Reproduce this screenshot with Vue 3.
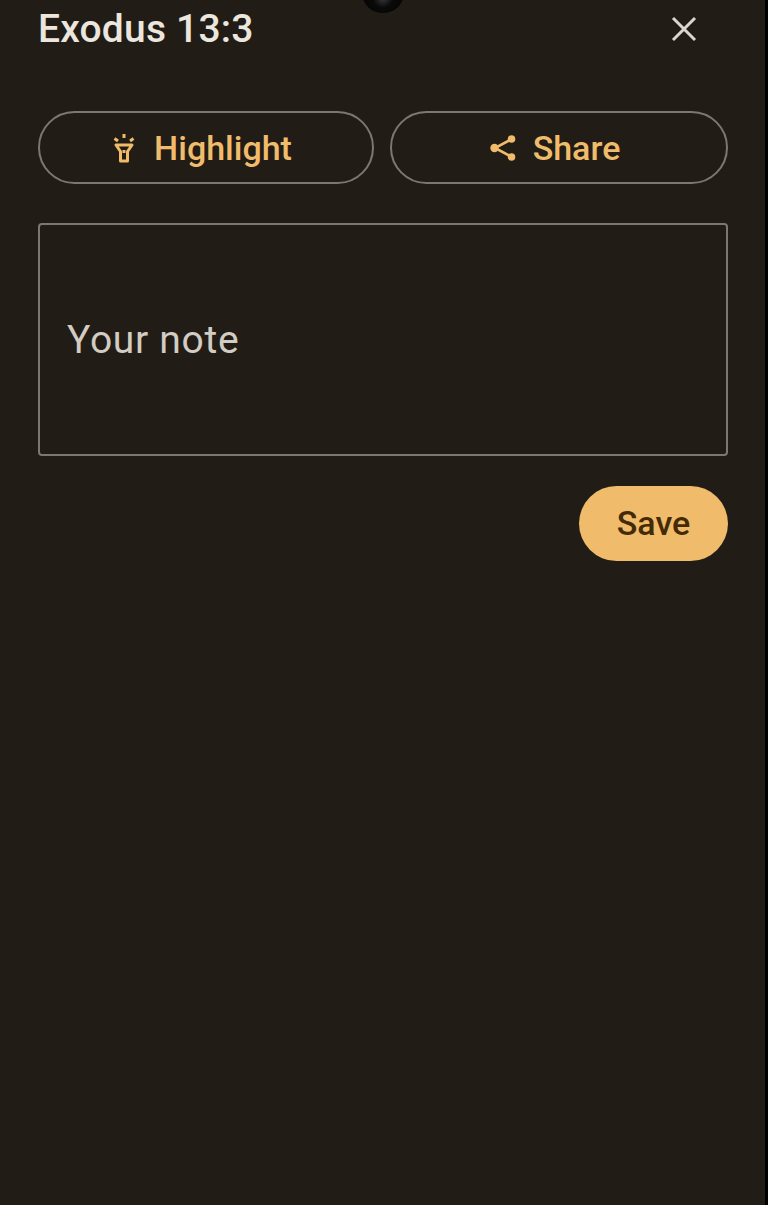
<script setup>
</script>

<template>
  <main class="sheet">
    <div class="camera"></div>
    <header class="head">
      <h1 class="title">Exodus 13:3</h1>
      <button class="close" aria-label="Close">
        <svg width="26" height="26" viewBox="0 0 26 26" fill="none" stroke="#dcd7ce" stroke-width="3">
          <path d="M2 2L24 24M24 2L2 24" />
        </svg>
      </button>
    </header>
    <div class="actions">
      <button class="pill">
        <svg class="ico" width="22" height="30" viewBox="0 0 22 30" fill="none" stroke="#f0bc6b" stroke-width="3">
          <path d="M3 12h16l-4.500 6.500v9.500h-7v-9.500z" stroke-linejoin="round" />
          <path d="M11 17v3" />
          <path d="M11 1v4M1.500 5.500l3.500 2.500M20.500 5.500L17 8" />
        </svg>
        <span>Highlight</span>
      </button>
      <button class="pill share">
        <svg class="ico" width="28" height="30" viewBox="0 0 28 30" fill="none" stroke="#f0bc6b" stroke-width="2.600">
          <path d="M22 6.500L6 15l16 8.500" />
          <circle cx="22.500" cy="6" r="3.800" fill="#f0bc6b" stroke="none" />
          <circle cx="5.500" cy="15" r="4.200" fill="#f0bc6b" stroke="none" />
          <circle cx="22.500" cy="24" r="3.800" fill="#f0bc6b" stroke="none" />
        </svg>
        <span>Share</span>
      </button>
    </div>
    <div class="note">Your note</div>
    <div class="foot">
      <button class="save">Save</button>
    </div>
  </main>
</template>

<style scoped>
.sheet {
  position: relative;
  box-sizing: border-box;
  height: 1205px;
  padding: 0 37px 0 38px;
  border-right: 3px solid #000;
  background: #211c16;
  font-family: Roboto, "Liberation Sans", sans-serif;
  overflow: hidden;
}
.camera {
  position: absolute;
  top: -27px;
  left: 362px;
  width: 42px;
  height: 40px;
  border-radius: 50%;
  background: radial-gradient(circle at 50% 62%, #3a3a3c 0, #0a0a0a 30%, #000 100%);
}
.head {
  display: flex;
  align-items: center;
  justify-content: space-between;
  height: 58px;
}
.title {
  margin: 0;
  font-size: 39px;
  line-height: 58px;
  font-weight: 500;
  letter-spacing: 0.2px;
  color: #ebe6de;
}
.close {
  display: flex;
  margin-right: 31px;
  padding: 0;
  border: 0;
  background: none;
}
.actions {
  display: flex;
  gap: 16px;
  margin-top: 53px;
}
.pill {
  flex: 1;
  display: flex;
  align-items: center;
  justify-content: center;
  gap: 19px;
  height: 73px;
  padding: 0 7px 0 0;
  border: 2px solid #7d786d;
  border-radius: 37px;
  background: none;
  color: #f0bc6b;
  font: 500 34px Roboto, "Liberation Sans", sans-serif;
}
.share {
  gap: 16px;
  padding-right: 9px;
}
.note {
  box-sizing: border-box;
  display: flex;
  align-items: center;
  height: 233px;
  margin-top: 39px;
  padding-left: 27px;
  border: 2px solid #7d786d;
  border-radius: 4px;
  color: #d2ccc2;
  font-size: 39px;
  letter-spacing: 0.7px;
}
.foot {
  display: flex;
  justify-content: flex-end;
  margin-top: 30px;
}
.save {
  width: 149px;
  height: 75px;
  padding: 0 0 2px;
  border: 0;
  border-radius: 38px;
  background: #f0bc6b;
  color: #442b05;
  font: 500 34px Roboto, "Liberation Sans", sans-serif;
}
</style>
